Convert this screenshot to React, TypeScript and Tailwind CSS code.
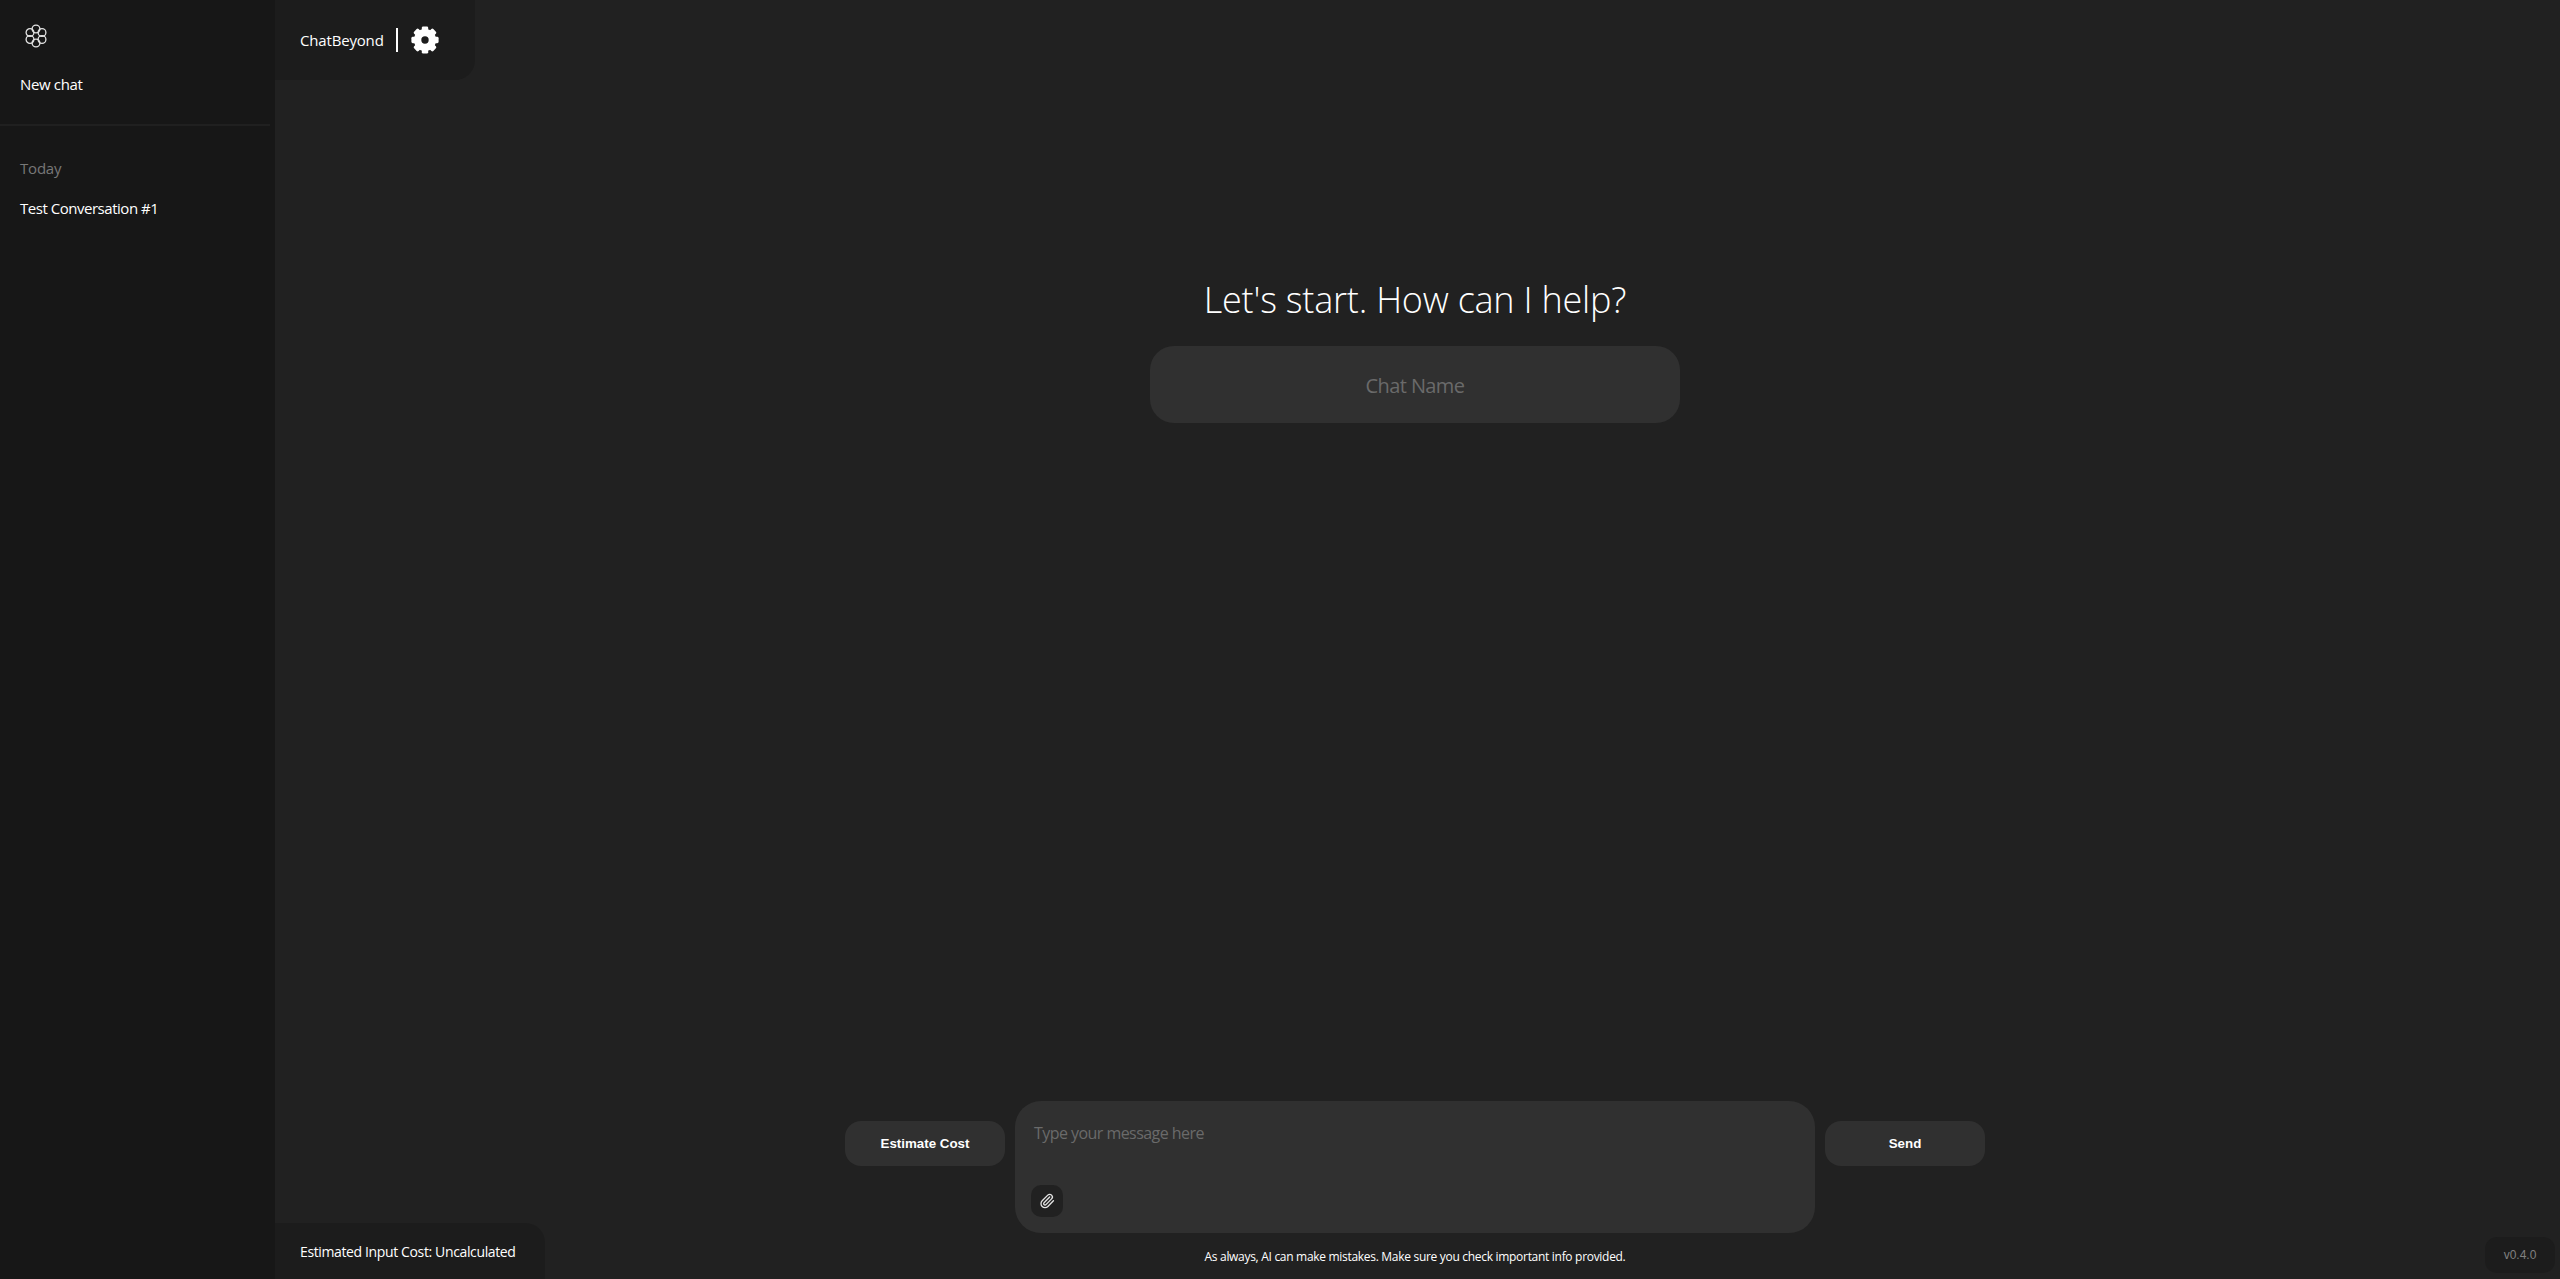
import { Paperclip } from "lucide-react";

const sans = "font-['Open_Sans','Noto_Sans',sans-serif]";

function Logo() {
  const pts = [
    [12, 5],
    [18, 8.5],
    [18, 15.5],
    [12, 19],
    [6, 15.5],
    [6, 8.5],
  ];
  return (
    <svg width="24" height="24" viewBox="0 0 24 24" fill="none" stroke="#e4e4e4" strokeWidth="1.3">
      {pts.map(([x, y], i) => (
        <circle key={i} cx={x} cy={y} r="3.9" />
      ))}
    </svg>
  );
}

function Gear() {
  const angles = [0, 45, 90, 135, 180, 225, 270, 315];
  return (
    <svg width="28" height="28" viewBox="0 0 28 28" className="ml-[13px] shrink-0">
      <circle cx="14" cy="14" r="7.4" fill="none" stroke="#fff" strokeWidth="7.4" />
      {angles.map((a) => (
        <rect key={a} x="10.8" y="0.4" width="6.4" height="6" rx="1.4" fill="#fff" transform={`rotate(${a} 14 14)`} />
      ))}
    </svg>
  );
}

export default function App() {
  return (
    <div className={`flex h-screen w-full overflow-hidden bg-[#212121] text-white ${sans}`}>
      <aside className="flex w-[275px] shrink-0 flex-col bg-[#171717]">
        <div className="pl-6 pt-[24px]">
          <Logo />
        </div>
        <button className="mt-[26px] self-start pl-5 text-left text-[15px] leading-[20px] tracking-[-0.35px]">New chat</button>
        <div className="mt-[30px] h-[2px] w-[270px] bg-[#202020]" />
        <div className="mt-[32px] pl-5 text-[15px] leading-[20px] tracking-[-0.2px] text-[#787878]">Today</div>
        <div className="mt-[20px] pl-5 text-[15px] leading-[20px] tracking-[-0.47px]">Test Conversation #1</div>
      </aside>

      <main className="relative flex min-w-0 flex-1 flex-col pr-[5px]">
        <header className="flex h-20 w-[200px] items-center rounded-br-[20px] bg-[#1c1c1c] pl-[25px]">
          <span className="text-[15px] leading-[20px] tracking-[-0.17px]">ChatBeyond</span>
          <span className="ml-[12px] h-6 w-[2px] bg-white" />
          <Gear />
        </header>

        <section className="mt-[190px] flex flex-col items-center">
          <h1 className="text-[36px] leading-[60px] font-light tracking-[-0.22px]">Let's start. How can I help?</h1>
          <div className="mt-[16px] flex h-[77px] w-[530px] items-center justify-center rounded-3xl bg-[#303030] pt-[2px] text-[20px] tracking-[-0.6px] text-[#6a6a6a]">
            Chat Name
          </div>
        </section>

        <section className="mt-auto flex flex-col items-center">
          <div className="flex items-start gap-[10px]">
            <button className="mt-5 h-[45px] w-40 rounded-2xl bg-[#303030] font-['Liberation_Sans',sans-serif] text-[13.33px] font-bold">
              Estimate Cost
            </button>
            <div className="flex h-[132px] w-[800px] flex-col justify-between rounded-[26px] bg-[#303030] pb-4 pl-4 pt-[22px]">
              <div className="pl-[3px] text-[16px] leading-[20px] tracking-[-0.55px] text-[#6a6a6a]">Type your message here</div>
              <button className="flex h-8 w-8 items-center justify-center rounded-[10px] bg-[#212121]">
                <Paperclip size={16} className="text-[#e4e4e4]" />
              </button>
            </div>
            <button className="mt-5 h-[45px] w-40 rounded-2xl bg-[#303030] font-['Liberation_Sans',sans-serif] text-[13.33px] font-bold">
              Send
            </button>
          </div>
          <p className="mb-[14px] mt-[16px] text-[12px] leading-[16px] tracking-[-0.3px]">
            As always, AI can make mistakes. Make sure you check important info provided.
          </p>
        </section>

        <div className="absolute bottom-0 left-0 flex h-14 w-[270px] items-center rounded-tr-[20px] bg-[#1c1c1c] pl-[25px] text-[14px] tracking-[-0.37px]">
          Estimated Input Cost: Uncalculated
        </div>
        <div className="absolute bottom-[6px] right-[5px] flex h-9 w-[70px] items-center justify-center rounded-xl bg-[#1c1c1c] font-['Liberation_Sans',sans-serif] text-[12px] text-[#808080]">
          v0.4.0
        </div>
      </main>
    </div>
  );
}
